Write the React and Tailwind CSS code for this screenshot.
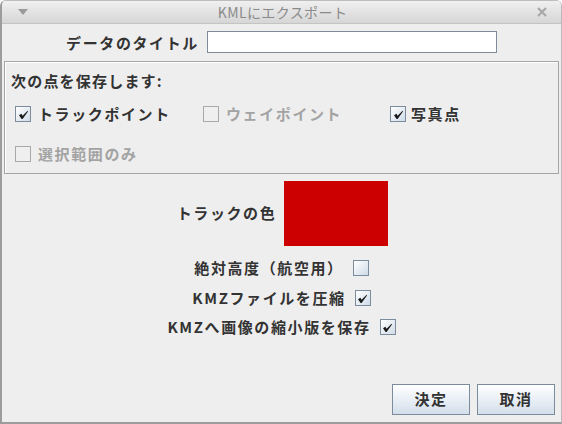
import React from "react";

const FONT = { fontFamily: '"Noto Sans CJK JP", "Noto Sans", sans-serif' };

function Check({ checked, disabled }) {
  return (
    <div
      className={
        "w-[16px] h-[16px] shrink-0 border flex items-center justify-center " +
        (disabled
          ? "border-[#a9a9a9] bg-[#efefef]"
          : "border-[#7d8c9c] bg-gradient-to-br from-[#ffffff] to-[#cfdbe8]")
      }
    >
      {checked && (
        <svg width="11" height="11" viewBox="0 0 11 11">
          <path d="M1 6.2 L3.4 4.8 L4.6 6.8 L9.6 1.8 L10 2.6 L4.6 10 L3.6 10 Z" fill="#1a1a1a" />
        </svg>
      )}
    </div>
  );
}

export default function App() {
  return (
    <div
      className="w-[562px] h-[424px] bg-[#eeeeee] flex flex-col rounded-t-[6px] border-l-2 border-r border-b-2 border-l-[#9c9c9c] border-r-[#b8b8b8] border-b-[#9c9c9c] overflow-hidden"
      style={FONT}
    >
      {/* title bar */}
      <div className="h-[24px] shrink-0 flex items-center px-[16px] bg-gradient-to-b from-[#f0f0f0] to-[#d6d6d6] border-b border-[#c4c4c4] border-t border-t-[#bdbdbd]">
        <svg width="10" height="7" viewBox="0 0 10 7" className="shrink-0">
          <path d="M0 0 L10 0 L5 6 Z" fill="#9a9a9a" />
        </svg>
        <div className="flex-1 text-center text-[14px] tracking-[0.4px] text-[#8a8a8a] leading-none">KMLにエクスポート</div>
        <svg width="10" height="10" viewBox="0 0 10 10" className="shrink-0 mr-[-2px]">
          <path d="M1 1 L9 9 M9 1 L1 9" stroke="#a8a8a8" strokeWidth="2.2" />
        </svg>
      </div>

      {/* title row */}
      <div className="flex justify-center items-center mt-[7px] gap-[8px]">
        <span className="text-[15px] font-bold tracking-[1.6px] text-[#333333] leading-none">データのタイトル</span>
        <div className="w-[290px] h-[22px] bg-white border border-[#7f8c99]" />
      </div>

      {/* panel */}
      <div className="mx-[2px] mt-[8px] h-[113px] border border-[#a5a5a5] shadow-[inset_1px_1px_0_#ffffff] flex flex-col px-[6px]">
        <div className="mt-[9px] text-[15px] font-bold tracking-[1.2px] text-[#333333] leading-[20px]">次の点を保存します:</div>
        <div className="flex items-center mt-[12px] h-[22px] ml-[4px]">
          <div className="flex items-center w-[188px]">
            <Check checked />
            <span className="ml-[7px] text-[15px] font-bold tracking-[1.6px] text-[#333333]">トラックポイント</span>
          </div>
          <div className="flex items-center w-[187px]">
            <Check disabled />
            <span className="ml-[7px] text-[15px] font-bold tracking-[1.6px] text-[#a3a3a3]">ウェイポイント</span>
          </div>
          <div className="flex items-center">
            <Check checked />
            <span className="ml-[5px] text-[15px] font-bold tracking-[1.6px] text-[#333333]">写真点</span>
          </div>
        </div>
        <div className="flex items-center mt-[18px] h-[22px] ml-[4px]">
          <Check disabled />
          <span className="ml-[7px] text-[15px] font-bold tracking-[1.6px] text-[#a3a3a3]">選択範囲のみ</span>
        </div>
      </div>

      {/* track colour */}
      <div className="flex justify-center items-center mt-[7px] gap-[8px] pl-[2px]">
        <span className="text-[15px] font-bold tracking-[1.6px] text-[#333333]">トラックの色</span>
        <div className="w-[104px] h-[65px] bg-[#cc0000]" />
      </div>

      <div className="flex justify-center items-center mt-[14px] gap-[9px] h-[16px]">
        <span className="text-[15px] font-bold tracking-[1.6px] text-[#333333]">絶対高度（航空用）</span>
        <Check />
      </div>
      <div className="flex justify-center items-center mt-[14px] gap-[9px] h-[16px]">
        <span className="text-[15px] font-bold tracking-[1.6px] text-[#333333]">KMZファイルを圧縮</span>
        <Check checked />
      </div>
      <div className="flex justify-center items-center mt-[13px] gap-[9px] h-[16px]">
        <span className="text-[15px] font-bold tracking-[1.6px] text-[#333333]">KMZへ画像の縮小版を保存</span>
        <Check checked />
      </div>

      <div className="flex-1" />
      <div className="flex justify-end gap-[7px] pr-[6px] mb-[7px]">
        <button className="w-[78px] h-[31px] border border-[#7d8c9c] bg-gradient-to-b from-[#ffffff] to-[#d3dfeb] text-[15px] font-bold tracking-[1.6px] text-[#333333]">決定</button>
        <button className="w-[78px] h-[31px] border border-[#7d8c9c] bg-gradient-to-b from-[#ffffff] to-[#d3dfeb] text-[15px] font-bold tracking-[1.6px] text-[#333333]">取消</button>
      </div>
    </div>
  );
}
